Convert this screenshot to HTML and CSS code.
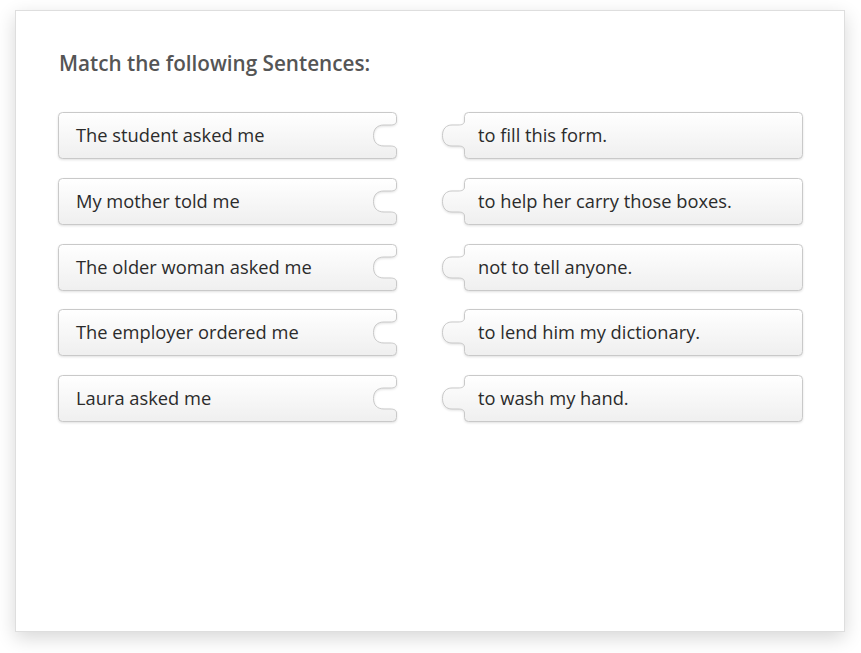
FILE: index.html
```html
<!DOCTYPE html>
<html>
<head>
<meta charset="utf-8">
<link rel="stylesheet" href="styles.css">
</head>
<body>
<svg class="defs" width="0" height="0" aria-hidden="true">
  <defs>
    <linearGradient id="pieceGrad" x1="0" y1="0" x2="0" y2="1">
      <stop offset="0" stop-color="#ffffff"/>
      <stop offset="1" stop-color="#efefef"/>
    </linearGradient>
  </defs>
</svg>
<div class="card">
  <h1 class="title">Match the following Sentences:</h1>
  <div class="board">
    <div class="piece piece-left">
      <svg class="shape" width="340" height="48" viewBox="0 0 340 48"><path class="outline" d="M4.5,0.5 H334.5 Q338.5,0.5 338.5,4.5 V9 C338.5,12 336,13 332,13 H326 C319,13 315.5,17 315.5,23.5 C315.5,30 319,34 326,34 H332 C336,34 338.5,35 338.5,38 V42.5 Q338.5,46.5 334.5,46.5 H4.5 Q0.5,46.5 0.5,42.5 V4.5 Q0.5,0.5 4.5,0.5 Z"/></svg>
      <span class="label">The student asked me</span>
    </div>
    <div class="piece piece-right">
      <svg class="shape" width="361" height="48" viewBox="0 0 361 48"><path class="outline" d="M26.5,0.5 H356.5 Q360.5,0.5 360.5,4.5 V42.5 Q360.5,46.5 356.5,46.5 H26.5 Q22.5,46.5 22.5,42.5 V38 C22.5,35 20,34 16,34 H10 C4,34 0.5,30 0.5,23.5 C0.5,17 4,13 10,13 H16 C20,13 22.5,12 22.5,9 V4.5 Q22.5,0.5 26.5,0.5 Z"/></svg>
      <span class="label">to fill this form.</span>
    </div>

    <div class="piece piece-left">
      <svg class="shape" width="340" height="48" viewBox="0 0 340 48"><path class="outline" d="M4.5,0.5 H334.5 Q338.5,0.5 338.5,4.5 V9 C338.5,12 336,13 332,13 H326 C319,13 315.5,17 315.5,23.5 C315.5,30 319,34 326,34 H332 C336,34 338.5,35 338.5,38 V42.5 Q338.5,46.5 334.5,46.5 H4.5 Q0.5,46.5 0.5,42.5 V4.5 Q0.5,0.5 4.5,0.5 Z"/></svg>
      <span class="label">My mother told me</span>
    </div>
    <div class="piece piece-right">
      <svg class="shape" width="361" height="48" viewBox="0 0 361 48"><path class="outline" d="M26.5,0.5 H356.5 Q360.5,0.5 360.5,4.5 V42.5 Q360.5,46.5 356.5,46.5 H26.5 Q22.5,46.5 22.5,42.5 V38 C22.5,35 20,34 16,34 H10 C4,34 0.5,30 0.5,23.5 C0.5,17 4,13 10,13 H16 C20,13 22.5,12 22.5,9 V4.5 Q22.5,0.5 26.5,0.5 Z"/></svg>
      <span class="label">to help her carry those boxes.</span>
    </div>

    <div class="piece piece-left">
      <svg class="shape" width="340" height="48" viewBox="0 0 340 48"><path class="outline" d="M4.5,0.5 H334.5 Q338.5,0.5 338.5,4.5 V9 C338.5,12 336,13 332,13 H326 C319,13 315.5,17 315.5,23.5 C315.5,30 319,34 326,34 H332 C336,34 338.5,35 338.5,38 V42.5 Q338.5,46.5 334.5,46.5 H4.5 Q0.5,46.5 0.5,42.5 V4.5 Q0.5,0.5 4.5,0.5 Z"/></svg>
      <span class="label">The older woman asked me</span>
    </div>
    <div class="piece piece-right">
      <svg class="shape" width="361" height="48" viewBox="0 0 361 48"><path class="outline" d="M26.5,0.5 H356.5 Q360.5,0.5 360.5,4.5 V42.5 Q360.5,46.5 356.5,46.5 H26.5 Q22.5,46.5 22.5,42.5 V38 C22.5,35 20,34 16,34 H10 C4,34 0.5,30 0.5,23.5 C0.5,17 4,13 10,13 H16 C20,13 22.5,12 22.5,9 V4.5 Q22.5,0.5 26.5,0.5 Z"/></svg>
      <span class="label">not to tell anyone.</span>
    </div>

    <div class="piece piece-left">
      <svg class="shape" width="340" height="48" viewBox="0 0 340 48"><path class="outline" d="M4.5,0.5 H334.5 Q338.5,0.5 338.5,4.5 V9 C338.5,12 336,13 332,13 H326 C319,13 315.5,17 315.5,23.5 C315.5,30 319,34 326,34 H332 C336,34 338.5,35 338.5,38 V42.5 Q338.5,46.5 334.5,46.5 H4.5 Q0.5,46.5 0.5,42.5 V4.5 Q0.5,0.5 4.5,0.5 Z"/></svg>
      <span class="label">The employer ordered me</span>
    </div>
    <div class="piece piece-right">
      <svg class="shape" width="361" height="48" viewBox="0 0 361 48"><path class="outline" d="M26.5,0.5 H356.5 Q360.5,0.5 360.5,4.5 V42.5 Q360.5,46.5 356.5,46.5 H26.5 Q22.5,46.5 22.5,42.5 V38 C22.5,35 20,34 16,34 H10 C4,34 0.5,30 0.5,23.5 C0.5,17 4,13 10,13 H16 C20,13 22.5,12 22.5,9 V4.5 Q22.5,0.5 26.5,0.5 Z"/></svg>
      <span class="label">to lend him my dictionary.</span>
    </div>

    <div class="piece piece-left">
      <svg class="shape" width="340" height="48" viewBox="0 0 340 48"><path class="outline" d="M4.5,0.5 H334.5 Q338.5,0.5 338.5,4.5 V9 C338.5,12 336,13 332,13 H326 C319,13 315.5,17 315.5,23.5 C315.5,30 319,34 326,34 H332 C336,34 338.5,35 338.5,38 V42.5 Q338.5,46.5 334.5,46.5 H4.5 Q0.5,46.5 0.5,42.5 V4.5 Q0.5,0.5 4.5,0.5 Z"/></svg>
      <span class="label">Laura asked me</span>
    </div>
    <div class="piece piece-right">
      <svg class="shape" width="361" height="48" viewBox="0 0 361 48"><path class="outline" d="M26.5,0.5 H356.5 Q360.5,0.5 360.5,4.5 V42.5 Q360.5,46.5 356.5,46.5 H26.5 Q22.5,46.5 22.5,42.5 V38 C22.5,35 20,34 16,34 H10 C4,34 0.5,30 0.5,23.5 C0.5,17 4,13 10,13 H16 C20,13 22.5,12 22.5,9 V4.5 Q22.5,0.5 26.5,0.5 Z"/></svg>
      <span class="label">to wash my hand.</span>
    </div>
  </div>
</div>
</body>
</html>
```

FILE: styles.css
```css
html, body {
  margin: 0;
  padding: 0;
  background: #ffffff;
}

body {
  font-family: "Open Sans", "Noto Sans", sans-serif;
  color: #2b2b2b;
  height: 653px;
}

.defs {
  position: absolute;
  width: 0;
  height: 0;
  overflow: hidden;
}

.card {
  box-sizing: border-box;
  width: 830px;
  height: 622px;
  margin: 10px 0 0 15px;
  padding: 39px 0 0 42px;
  background: #ffffff;
  border: 1px solid #dedede;
  box-shadow: 0 6px 18px rgba(0, 0, 0, 0.16);
}

.title {
  margin: 0 0 0 1px;
  font-size: 20.7px;
  line-height: 27px;
  font-weight: 600;
  color: #555555;
}

.board {
  display: grid;
  grid-template-columns: 340px 361px;
  column-gap: 44px;
  row-gap: 17.8px;
  margin-top: 35px;
}

.piece {
  position: relative;
  height: 48px;
  display: flex;
  align-items: center;
}

.shape {
  position: absolute;
  left: 0;
  top: 0;
  filter: drop-shadow(0 1px 1px rgba(0, 0, 0, 0.12));
}

.outline {
  fill: url(#pieceGrad);
  stroke: #c9c9c9;
  stroke-width: 1;
}

.label {
  position: relative;
  font-size: 18.3px;
  line-height: 24px;
  color: #2b2b2b;
  padding-bottom: 2px;
}

.piece-left .label {
  padding-left: 18px;
}

.piece-right .label {
  padding-left: 36px;
}
```
